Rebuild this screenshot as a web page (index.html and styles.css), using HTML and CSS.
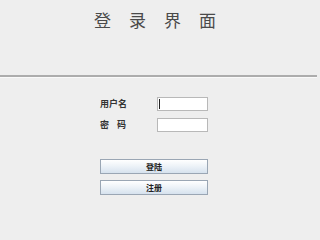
FILE: index.html
```html
<!DOCTYPE html>
<html lang="zh">
<head>
<meta charset="utf-8">
<title>登录界面</title>
<link rel="stylesheet" href="styles.css">
</head>
<body>
<div class="page">
  <header class="head">
    <h1 class="title"><span>登</span><span>录</span><span>界</span><span>面</span></h1>
  </header>
  <div class="divider"></div>
  <form class="form">
    <div class="row">
      <label class="label">用户名</label>
      <div class="field"><span class="caret"></span></div>
    </div>
    <div class="row">
      <label class="label spread"><span>密</span><span>码</span></label>
      <div class="field"></div>
    </div>
    <div class="buttons">
      <button type="button" class="btn">登陆</button>
      <button type="button" class="btn">注册</button>
    </div>
  </form>
</div>
</body>
</html>
```

FILE: styles.css
```css
html, body {
  margin: 0;
  padding: 0;
  background: #eeeeee;
  font-family: "Noto Sans CJK SC", "Noto Sans", sans-serif;
}
.page {
  width: 317px;
  height: 215px;
  overflow: hidden;
  display: flex;
  flex-direction: column;
}
.head {
  height: 75px;
  position: relative;
}
.title {
  margin: 0;
  padding: 10px 7px 0 0;
  display: flex;
  justify-content: center;
  gap: 18px;
  font-size: 17px;
  line-height: 20px;
  font-weight: normal;
  color: #4a4a4a;
}
.divider {
  height: 0;
  border-top: 2px solid #acacac;
  border-bottom: 1px solid #f9f9f9;
}
.form {
  display: flex;
  flex-direction: column;
  padding: 19px 0 0 100px;
  gap: 7px;
}
.row {
  display: flex;
  align-items: center;
  gap: 31px;
  height: 14px;
}
.label {
  width: 26px;
  font-size: 9px;
  font-weight: bold;
  color: #333;
  line-height: 14px;
  display: flex;
  white-space: nowrap;
}
.label.spread {
  justify-content: space-between;
}
.field {
  width: 49px;
  height: 12px;
  background: #ffffff;
  border: 1px solid #b8b8b8;
  display: flex;
  align-items: center;
}
.caret {
  width: 1px;
  height: 10px;
  margin-left: 1px;
  background: #222;
}
.buttons {
  display: flex;
  flex-direction: column;
  gap: 6px;
  margin-top: 20px;
}
.btn {
  width: 108px;
  height: 15px;
  padding: 0;
  margin: 0;
  border: 1px solid #9aa6b4;
  background: linear-gradient(to bottom, #ffffff 0%, #eef3f8 45%, #d6e2ee 100%);
  font-family: "Noto Sans CJK SC", "Noto Sans", sans-serif;
  font-size: 8px;
  font-weight: bold;
  line-height: 13px;
  color: #222;
}
```
